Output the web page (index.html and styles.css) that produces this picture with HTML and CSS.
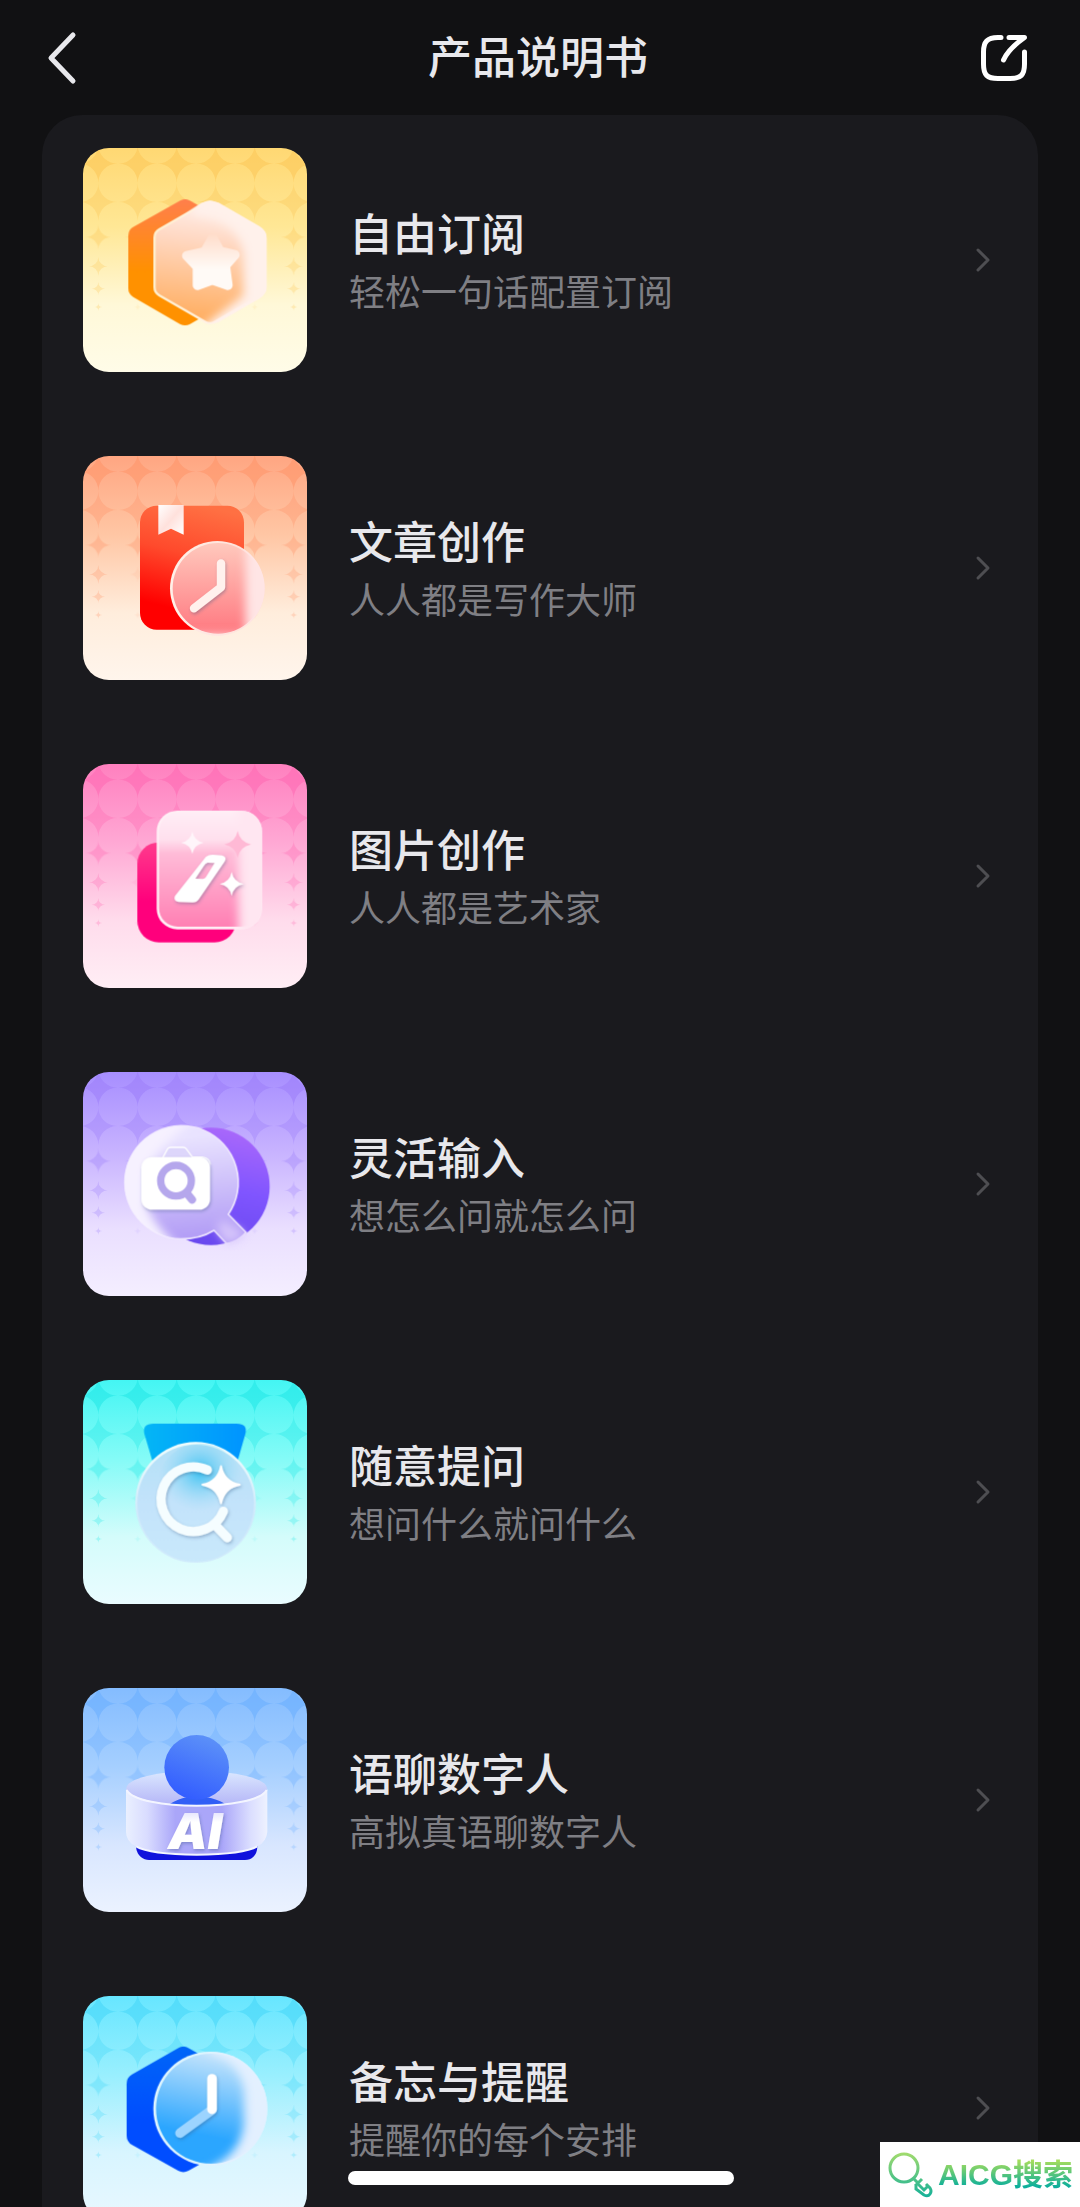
FILE: index.html
```html
<!DOCTYPE html>
<html lang="zh-CN">
<head>
    <meta charset="UTF-8">
    <title>产品说明书</title>
    <meta name="viewport" content="width=device-width,initial-scale=1">
    <link rel="stylesheet" href="styles.css">
</head>
<body>
    <!-- Shared shapes -->
    <svg class="defs" width="0" height="0" aria-hidden="true">
        <defs>
            <path id="gap" d="M0-1A1 1 0 0 0 1 0A1 1 0 0 0 0 1A1 1 0 0 0-1 0A1 1 0 0 0 0-1Z"/>
            <path id="spark" d="M0-1Q.16-.16 1 0Q.16.16 0 1Q-.16.16-1 0Q-.16-.16 0-1Z"/>
            <g id="gapRow">
                <use href="#gap" transform="translate(46) scale(57)"/>
                <use href="#gap" transform="translate(164) scale(57)"/>
                <use href="#gap" transform="translate(281) scale(57)"/>
                <use href="#gap" transform="translate(398) scale(57)"/>
                <use href="#gap" transform="translate(515) scale(57)"/>
                <use href="#gap" transform="translate(632) scale(57)"/>
            </g>
            <g id="dots" fill="currentColor">
                <use href="#gapRow" y="47" opacity=".6"/>
                <use href="#gapRow" y="162" opacity=".36"/>
                <g opacity=".36">
                    <use href="#gap" transform="translate(46 267) scale(38)"/>
                    <use href="#gap" transform="translate(164 267) scale(38)"/>
                    <use href="#gap" transform="translate(515 267) scale(38)"/>
                    <use href="#gap" transform="translate(632 267) scale(38)"/>
                </g>
                <g opacity=".3">
                    <use href="#gap" transform="translate(46 355) scale(28)"/>
                    <use href="#gap" transform="translate(632 355) scale(28)"/>
                    <use href="#gap" transform="translate(46 422) scale(20)"/>
                    <use href="#gap" transform="translate(632 422) scale(20)"/>
                    <use href="#gap" transform="translate(46 477) scale(12)"/>
                    <use href="#gap" transform="translate(632 477) scale(12)"/>
                </g>
                <g opacity=".12">
                    <use href="#gap" transform="translate(164 355) scale(24)"/>
                    <use href="#gap" transform="translate(515 355) scale(24)"/>
                    <use href="#gap" transform="translate(164 477) scale(12)"/>
                    <use href="#gap" transform="translate(515 477) scale(12)"/>
                </g>
            </g>
            <filter id="soft" x="-30%" y="-30%" width="160%" height="160%"><feGaussianBlur stdDeviation="14"/></filter>
            <filter id="drop" x="-20%" y="-20%" width="150%" height="150%">
                <feDropShadow dx="3" dy="5" stdDeviation="4" flood-color="#31507e" flood-opacity=".35"/>
            </filter>
        </defs>
    </svg>

    <div class="app">
        <header class="navbar">
            <button class="nav-btn" type="button" aria-label="返回">
                <svg width="32" height="54" viewBox="0 0 32 54"><path d="M27 4L5 27L27 50" fill="none" stroke="#e8e8ec" stroke-width="5" stroke-linecap="round" stroke-linejoin="round"/></svg>
            </button>
            <h1>产品说明书</h1>
            <button class="nav-btn" type="button" aria-label="分享">
                <svg width="48" height="48" viewBox="0 0 48 48" fill="none" stroke="#fff" stroke-width="5" stroke-linecap="round" stroke-linejoin="round">
                    <path d="M21 3.500H18C7 3.500 3.500 8 3.500 18V30C3.500 41 7 44.500 18 44.500H30C41 44.500 44.500 41 44.500 30V18"/>
                    <path d="M29 3.500H44.500C34 11 27 18 23.500 26"/>
                </svg>
            </button>
        </header>

        <main class="content">
            <ul class="guide-list">
                <li>
                    <a class="guide-item" href="#subscribe">
                        <svg class="tile tile-yellow" viewBox="0 0 672 672" aria-hidden="true">
                            <defs>
                                <linearGradient id="y1" gradientUnits="userSpaceOnUse" x1="0" y1="180" x2="0" y2="400"><stop offset="0" stop-color="#ff7f4d"/><stop offset="1" stop-color="#ff9100"/></linearGradient>
                                <linearGradient id="y2" gradientUnits="userSpaceOnUse" x1="380" y1="190" x2="340" y2="550"><stop offset="0" stop-color="#fff0ec"/><stop offset=".3" stop-color="#ffd9c4"/><stop offset="1" stop-color="#ffac5c"/></linearGradient>
                                <linearGradient id="y3" gradientUnits="userSpaceOnUse" x1="250" y1="0" x2="590" y2="0"><stop offset="0" stop-color="#fff0cf"/><stop offset=".6" stop-color="#fff3e6"/><stop offset="1" stop-color="#fff1ea"/></linearGradient>
                                <linearGradient id="y4" gradientUnits="userSpaceOnUse" x1="0" y1="285" x2="0" y2="390"><stop offset="0" stop-color="#ffddca"/><stop offset="1" stop-color="#fffaf6"/></linearGradient>
                                <clipPath id="yc"><path d="M420 187Q436 187 446 192L568 262Q590 275 590 300V442Q590 466 568 480L446 550Q420 560 396 550L274 480Q252 466 252 442V300Q252 275 274 262L396 192Q408 187 420 187Z"/></clipPath>
                            </defs>
                            <use href="#dots"/>
                            <g transform="translate(-39 -28)">
                                <path d="M345 212L205 291V449L345 530L485 449V291Z" fill="url(#y1)" stroke="url(#y1)" stroke-width="60" stroke-linejoin="round"/>
                                <path d="M420 217L282 297V445L420 525L558 445V297Z" fill="url(#y3)" stroke="url(#y3)" stroke-width="64" stroke-linejoin="round"/>
                                <path d="M420 217L282 297V445L420 525L558 445V297Z" fill="url(#y2)" stroke="url(#y2)" stroke-width="50" stroke-linejoin="round"/>
                                <g clip-path="url(#yc)"><path d="M370 150H620V600H350L520 470V340Q500 240 370 230Z" fill="#fff1eb" filter="url(#soft)"/></g>
                                <path d="M428 297L450 337L495 348L466 381L474 440L427 424L382 440L382 385L350 351L404 339Z" fill="url(#y4)" stroke="url(#y4)" stroke-width="28" stroke-linejoin="round"/>
                            </g>
                        </svg>
                        <span class="guide-text">
                            <span class="guide-title">自由订阅</span>
                            <span class="guide-desc">轻松一句话配置订阅</span>
                        </span>
                        <svg class="arrow" viewBox="0 0 16 26"><path d="M3 3L13 13L3 23"/></svg>
                    </a>
                </li>
                <li>
                    <a class="guide-item" href="#article">
                        <svg class="tile tile-orange" viewBox="0 0 672 672" aria-hidden="true">
                            <defs>
                                <linearGradient id="o1" x1=".6" y1="0" x2=".4" y2="1"><stop offset="0" stop-color="#ff7043"/><stop offset=".4" stop-color="#ff4a2c"/><stop offset=".85" stop-color="#ff0000"/></linearGradient>
                                <linearGradient id="o2" x1="0" y1="0" x2="0" y2="1"><stop offset="0" stop-color="#ffc9bd"/><stop offset="1" stop-color="#ff7880"/></linearGradient>
                                <linearGradient id="o3" x1="0" y1="0" x2="1" y2="1"><stop offset="0" stop-color="#fff"/><stop offset=".5" stop-color="#ffe1dc"/><stop offset="1" stop-color="#fff"/></linearGradient>
                                <linearGradient id="o4" x1="0" y1="0" x2="1" y2="0"><stop offset="0" stop-color="#fff0e8"/><stop offset="1" stop-color="#ffdcd4"/></linearGradient>
                                <clipPath id="oc"><circle cx="442" cy="433" r="142"/></clipPath>
                            </defs>
                            <use href="#dots"/>
                            <g transform="translate(-39 -36)">
                                <rect x="210" y="185" width="312" height="372" rx="50" fill="url(#o1)"/>
                                <path d="M265 183H341V272L303 254L265 272Z" fill="url(#o3)"/>
                                <circle cx="442" cy="433" r="142" fill="url(#o4)"/>
                                <circle cx="444" cy="433" r="136" fill="url(#o2)"/>
                                <g clip-path="url(#oc)"><path d="M526 270H620V620H340V572H526Z" fill="#ffe5e5" filter="url(#soft)"/></g>
                                <path d="M453 358V430L372 493" fill="none" stroke="#fff1ed" stroke-width="25" stroke-linecap="round" stroke-linejoin="round" filter="url(#drop)"/>
                            </g>
                        </svg>
                        <span class="guide-text">
                            <span class="guide-title">文章创作</span>
                            <span class="guide-desc">人人都是写作大师</span>
                        </span>
                        <svg class="arrow" viewBox="0 0 16 26"><path d="M3 3L13 13L3 23"/></svg>
                    </a>
                </li>
                <li>
                    <a class="guide-item" href="#image">
                        <svg class="tile tile-pink" viewBox="0 0 672 672" aria-hidden="true">
                            <defs>
                                <linearGradient id="p1" x1="0" y1="0" x2="0" y2="1"><stop offset="0" stop-color="#ff3c8d"/><stop offset=".6" stop-color="#ff007c"/></linearGradient>
                                <linearGradient id="p2" x1="0" y1="0" x2="0" y2="1"><stop offset="0" stop-color="#ffeef6"/><stop offset=".24" stop-color="#ffe0ee"/><stop offset=".36" stop-color="#ffbcd8"/><stop offset="1" stop-color="#ff80b4"/></linearGradient>
                                <clipPath id="pc"><rect x="260" y="168" width="316" height="356" rx="62"/></clipPath>
                            </defs>
                            <use href="#dots"/>
                            <g transform="translate(-39 -28)">
                                <rect x="202" y="263" width="296" height="300" rx="64" fill="url(#p1)"/>
                                <rect x="260" y="168" width="316" height="356" rx="62" fill="#fff0f6"/>
                                <rect x="267" y="173" width="302" height="343" rx="56" fill="url(#p2)"/>
                                <g clip-path="url(#pc)"><path d="M505 130H620V560H505Z" fill="#ffe6f1" filter="url(#soft)"/></g>
                                <g filter="url(#drop)">
                                    <path d="M408 306Q416 300 428 300L456 302Q472 306 464 320L386 434Q380 443 368 443L326 442Q308 438 315 424ZM413 324Q406 326 402 333L376 372L398 373Q404 373 408 367L434 325Z" fill="#fff" fill-rule="evenodd"/>
                                    <use href="#spark" transform="translate(485 388) scale(36)" fill="#fff"/>
                                </g>
                                <use href="#spark" transform="translate(503 269) scale(40)" fill="#ffb9d5"/>
                                <use href="#spark" transform="translate(367 264) scale(34)" fill="#fff5fa"/>
                            </g>
                        </svg>
                        <span class="guide-text">
                            <span class="guide-title">图片创作</span>
                            <span class="guide-desc">人人都是艺术家</span>
                        </span>
                        <svg class="arrow" viewBox="0 0 16 26"><path d="M3 3L13 13L3 23"/></svg>
                    </a>
                </li>
                <li>
                    <a class="guide-item" href="#input">
                        <svg class="tile tile-purple" viewBox="0 0 672 672" aria-hidden="true">
                            <defs>
                                <linearGradient id="v1" x1=".6" y1="0" x2=".4" y2="1"><stop offset="0" stop-color="#a968fb"/><stop offset=".5" stop-color="#8055ff"/><stop offset="1" stop-color="#6848ee"/></linearGradient>
                                <linearGradient id="v2" gradientUnits="userSpaceOnUse" x1="390" y1="230" x2="420" y2="520"><stop offset="0" stop-color="#e9e3ff"/><stop offset="1" stop-color="#b49ff6"/></linearGradient>
                                <clipPath id="vc"><circle cx="332" cy="368" r="169"/></clipPath>
                            </defs>
                            <use href="#dots"/>
                            <g transform="translate(-39 -37)">
                                <circle cx="423" cy="380" r="176" fill="url(#v1)"/>
                                <path d="M475 464L528 518Q505 545 470 552L432 512Q390 538 332 538A170 170 0 1 1 475 464Z" fill="url(#v2)" stroke="#eee5ff" stroke-width="5"/>
                                <path d="M455 480L525 520Q500 548 470 550L440 505Z" fill="#d5c4fb" filter="url(#soft)"/>
                                <g clip-path="url(#vc)"><path d="M120 150H420Q290 230 230 330V440Q260 510 340 570H120Z" fill="#f6f1ff" filter="url(#soft)"/></g>
                                <path d="M275 300L293 267Q296 263 302 263H339Q346 263 349 268L367 292H397Q420 296 421 315" fill="#ddd6fb" stroke="#fff" stroke-width="4"/>
                                <rect x="214" y="292" width="206" height="158" rx="32" fill="#fff" filter="url(#drop)"/>
                                <path d="M350 400L366 420" stroke="#b5a7ec" stroke-width="24" stroke-linecap="round"/>
                                <circle cx="318" cy="363" r="46" fill="#fff" stroke="#b5a7ec" stroke-width="22"/>
                            </g>
                        </svg>
                        <span class="guide-text">
                            <span class="guide-title">灵活输入</span>
                            <span class="guide-desc">想怎么问就怎么问</span>
                        </span>
                        <svg class="arrow" viewBox="0 0 16 26"><path d="M3 3L13 13L3 23"/></svg>
                    </a>
                </li>
                <li>
                    <a class="guide-item" href="#ask">
                        <svg class="tile tile-cyan" viewBox="0 0 672 672" aria-hidden="true">
                            <defs>
                                <linearGradient id="c1" x1="0" y1="0" x2="1" y2="0"><stop offset="0" stop-color="#04b6f6"/><stop offset="1" stop-color="#0094ff"/></linearGradient>
                                <linearGradient id="c2" x1="0" y1="0" x2="0" y2="1"><stop offset="0" stop-color="#b3e1f7"/><stop offset=".5" stop-color="#c3e3fb"/><stop offset="1" stop-color="#c9e9fb"/></linearGradient>
                                <radialGradient id="c3" cx=".5" cy=".35" r=".5"><stop offset="0" stop-color="#3ac2f2"/><stop offset="1" stop-color="#9edcf8" stop-opacity="0"/></radialGradient>
                                <linearGradient id="c4" x1="0" y1="0" x2="0" y2="1"><stop offset="0" stop-color="#f2fffe"/><stop offset=".6" stop-color="#cfe9fb"/></linearGradient>
                            </defs>
                            <use href="#dots"/>
                            <g transform="translate(-39 -30)">
                                <path d="M250 161H500Q534 161 526 192L495 300H255L223 192Q216 161 250 161Z" fill="url(#c1)"/>
                                <circle cx="377" cy="397" r="181" fill="url(#c4)"/>
                                <circle cx="377" cy="399" r="175" fill="url(#c2)"/>
                                <ellipse cx="390" cy="340" rx="125" ry="120" fill="url(#c3)"/>
                                <g filter="url(#drop)">
                                    <path d="M412 300A97 97 0 1 0 460 424M435 465L472 503" fill="none" stroke="#f5fdff" stroke-width="28" stroke-linecap="round"/>
                                    <use href="#spark" transform="translate(453 344) scale(56)" fill="#fff" stroke="#fff" stroke-width=".1" stroke-linejoin="round"/>
                                </g>
                            </g>
                        </svg>
                        <span class="guide-text">
                            <span class="guide-title">随意提问</span>
                            <span class="guide-desc">想问什么就问什么</span>
                        </span>
                        <svg class="arrow" viewBox="0 0 16 26"><path d="M3 3L13 13L3 23"/></svg>
                    </a>
                </li>
                <li>
                    <a class="guide-item" href="#avatar">
                        <svg class="tile tile-blue" viewBox="0 0 672 672" aria-hidden="true">
                            <defs>
                                <linearGradient id="b1" x1=".7" y1="0" x2=".3" y2="1"><stop offset="0" stop-color="#5d92f8"/><stop offset="1" stop-color="#315bff"/></linearGradient>
                                <linearGradient id="b2" x1="0" y1="0" x2="1" y2="0"><stop offset="0" stop-color="#eaf0ff"/><stop offset=".15" stop-color="#d9dcff"/><stop offset=".35" stop-color="#aaa6f9"/><stop offset=".68" stop-color="#aaa6f9"/><stop offset=".88" stop-color="#dbdeff"/><stop offset="1" stop-color="#eef2ff"/></linearGradient>
                                <linearGradient id="b3" x1="0" y1="0" x2="0" y2="1"><stop offset="0" stop-color="#dbe8ff"/><stop offset="1" stop-color="#b4b5f7"/></linearGradient>
                                <linearGradient id="b4" x1="0" y1="0" x2="0" y2="1"><stop offset="0" stop-color="#c9c8fc"/><stop offset=".35" stop-color="#fff"/></linearGradient>
                            </defs>
                            <use href="#dots"/>
                            <g transform="translate(-39 -39)">
                                <path d="M198 505V517C202 545 220 555 237 555H525C545 555 560 543 562 517V505Z" fill="#1012dc"/>
                                <ellipse cx="380" cy="340" rx="211" ry="52" fill="url(#b3)"/>
                                <path d="M298 388Q325 372 350 367L340 345H418L410 367Q440 372 465 386Q380 398 298 388Z" fill="#315ff6"/>
                                <circle cx="380" cy="277" r="97" fill="url(#b1)"/>
                                <path d="M168 342C200 407 560 407 592 342V470Q590 500 562 514Q520 538 380 539Q240 538 198 514Q168 500 168 470Z" fill="url(#b2)"/>
                                <path d="M170 345C202 408 558 408 590 345M198 514Q240 538 380 539Q520 538 562 514" fill="none" stroke="#f3f5ff" stroke-width="6"/>
                                <text class="tile-text" x="294" y="522" fill="url(#b4)" filter="url(#drop)">AI</text>
                            </g>
                        </svg>
                        <span class="guide-text">
                            <span class="guide-title">语聊数字人</span>
                            <span class="guide-desc">高拟真语聊数字人</span>
                        </span>
                        <svg class="arrow" viewBox="0 0 16 26"><path d="M3 3L13 13L3 23"/></svg>
                    </a>
                </li>
                <li>
                    <a class="guide-item" href="#remind">
                        <svg class="tile tile-sky" viewBox="0 0 672 672" aria-hidden="true">
                            <defs>
                                <linearGradient id="s1" gradientUnits="userSpaceOnUse" x1="0" y1="197" x2="0" y2="573"><stop offset="0" stop-color="#0066f8"/><stop offset=".6" stop-color="#004dff"/></linearGradient>
                                <linearGradient id="s2" x1=".6" y1="0" x2=".4" y2="1"><stop offset="0" stop-color="#c9e6fc"/><stop offset=".75" stop-color="#2ba6ff"/><stop offset="1" stop-color="#2ba6ff"/></linearGradient>
                                <clipPath id="sc"><circle cx="421" cy="383" r="171"/></clipPath>
                            </defs>
                            <use href="#dots"/>
                            <g transform="translate(-39 -45)">
                                <path d="M340 229L202 308V464L340 541L478 464V308Z" fill="url(#s1)" stroke="url(#s1)" stroke-width="64" stroke-linejoin="round"/>
                                <circle cx="421" cy="383" r="171" fill="#e0f6ff"/>
                                <circle cx="423" cy="383" r="165" fill="url(#s2)"/>
                                <g clip-path="url(#sc)"><path d="M420 180H620V600H350L440 550Q510 510 522 430V330Q510 240 420 215Z" fill="#e3f0ff" filter="url(#soft)"/></g>
                                <g fill="none" stroke-width="29" stroke-linecap="round" filter="url(#drop)">
                                    <path d="M425 387L330 456" stroke="#9cd4ff"/>
                                    <path d="M426 293V385" stroke="#fff"/>
                                </g>
                            </g>
                        </svg>
                        <span class="guide-text">
                            <span class="guide-title">备忘与提醒</span>
                            <span class="guide-desc">提醒你的每个安排</span>
                        </span>
                        <svg class="arrow" viewBox="0 0 16 26"><path d="M3 3L13 13L3 23"/></svg>
                    </a>
                </li>
            </ul>
        </main>

        <div class="home-bar"></div>
        <a class="brand" href="#aicg">
            <svg width="46" height="46" viewBox="0 0 46 46" fill="none" stroke="url(#brandGradient)" stroke-width="3" aria-hidden="true">
                <defs><linearGradient id="brandGradient" gradientUnits="userSpaceOnUse" x1="0" y1="0" x2="0" y2="46"><stop offset="0" stop-color="#a4dc6c"/><stop offset="1" stop-color="#12b09a"/></linearGradient></defs>
                <circle cx="16" cy="16" r="14"/>
                <path d="M25 26L30 31M34 27L27 34M30 32L36 38L40 34M28 34V37L36 43Q40 45 42 42Q44 39 42 36L38 32"/>
            </svg>
            <span class="brand-name">AICG搜索</span>
        </a>
    </div>
</body>
</html>
```
FILE: styles.css
```css
* {
    margin: 0;
    padding: 0;
    box-sizing: border-box;
}

body {
    font-family: 'Noto Sans CJK SC', 'Noto Sans', sans-serif;
    background: #111113;
    color: #e8e8ec;
}

.defs {
    position: absolute;
}

.app {
    position: relative;
    display: flex;
    flex-direction: column;
    height: 100vh;
    overflow: hidden;
}

/* Header */
.navbar {
    flex: none;
    display: flex;
    justify-content: space-between;
    align-items: center;
    height: 115px;
    padding: 0 50px 0 46px;
}

.nav-btn {
    display: flex;
    width: 50px;
    border: none;
    background: none;
    cursor: pointer;
}

h1 {
    padding-bottom: 6px;
    font-size: 44px;
    line-height: 64px;
    font-weight: 500;
}

/* List */
.content {
    flex: 1;
    min-height: 0;
    padding: 0 42px;
    overflow-y: auto;
}

.content::-webkit-scrollbar {
    display: none;
}

.guide-list {
    list-style: none;
    display: flex;
    flex-direction: column;
    gap: 84px;
    padding: 33px 41px 84px;
    background: #1a1a1e;
    border-radius: 40px 40px 0 0;
}

.guide-item {
    display: flex;
    align-items: center;
    gap: 42px;
    padding-right: 6px;
    color: inherit;
    text-decoration: none;
}

.tile {
    flex: none;
    width: 224px;
    height: 224px;
    border-radius: 26px;
}

.tile-yellow { color: #fcc85a; background: linear-gradient(#ffd873, #ffe795 35%, #fff8d8 70%, #fffce8); }
.tile-orange { color: #ff966c; background: linear-gradient(#ffa682, #ffc6a4 35%, #ffeddc 70%, #fff5ec); }
.tile-pink { color: #ff6cb4; background: linear-gradient(#ff80bf, #ffa8d4 35%, #ffdcec 70%, #ffeef5); }
.tile-purple { color: #9e80fa; background: linear-gradient(#a78eff, #c7b2ff 35%, #eadfff 70%, #f4eeff); }
.tile-cyan { color: #26e8e6; background: linear-gradient(#44f5f3, #84fbf7 35%, #d4fcfb 70%, #eafcff); }
.tile-blue { color: #6cafff; background: linear-gradient(#84bcff, #a5cfff 35%, #d8e6ff 70%, #ebf2ff); }
.tile-sky { color: #48d8f8; background: linear-gradient(#67e6ff, #98effe 35%, #d8f5ff 70%, #e8f8ff); }

.tile-text {
    font-family: Inter, 'Liberation Sans', sans-serif;
    font-size: 150px;
    font-weight: 900;
    font-style: italic;
}

.guide-text {
    flex: 1;
    display: flex;
    flex-direction: column;
}

.guide-title {
    font-size: 44px;
    line-height: 60px;
    font-weight: 500;
}

.guide-desc {
    font-size: 36px;
    line-height: 56px;
    color: #7f7f84;
}

.arrow {
    flex: none;
    width: 16px;
    height: 26px;
    fill: none;
    stroke: #4e4e52;
    stroke-width: 3;
    stroke-linecap: round;
    stroke-linejoin: round;
}

/* Overlays */
.home-bar {
    position: absolute;
    left: 50%;
    bottom: 22px;
    width: 386px;
    height: 14px;
    margin-left: -192px;
    border-radius: 7px;
    background: #fff;
}

.brand {
    position: absolute;
    right: 0;
    bottom: 0;
    display: flex;
    align-items: center;
    gap: 4px;
    height: 65px;
    padding: 0 7px 0 8px;
    background: #fff;
    text-decoration: none;
}

.brand-name {
    font-family: 'Liberation Sans', 'Noto Sans CJK SC', sans-serif;
    font-size: 30px;
    line-height: 40px;
    font-weight: bold;
    color: transparent;
    background: linear-gradient(#a4dc5c 15%, #0aae9c 80%);
    background-clip: text;
    -webkit-background-clip: text;
}
```
